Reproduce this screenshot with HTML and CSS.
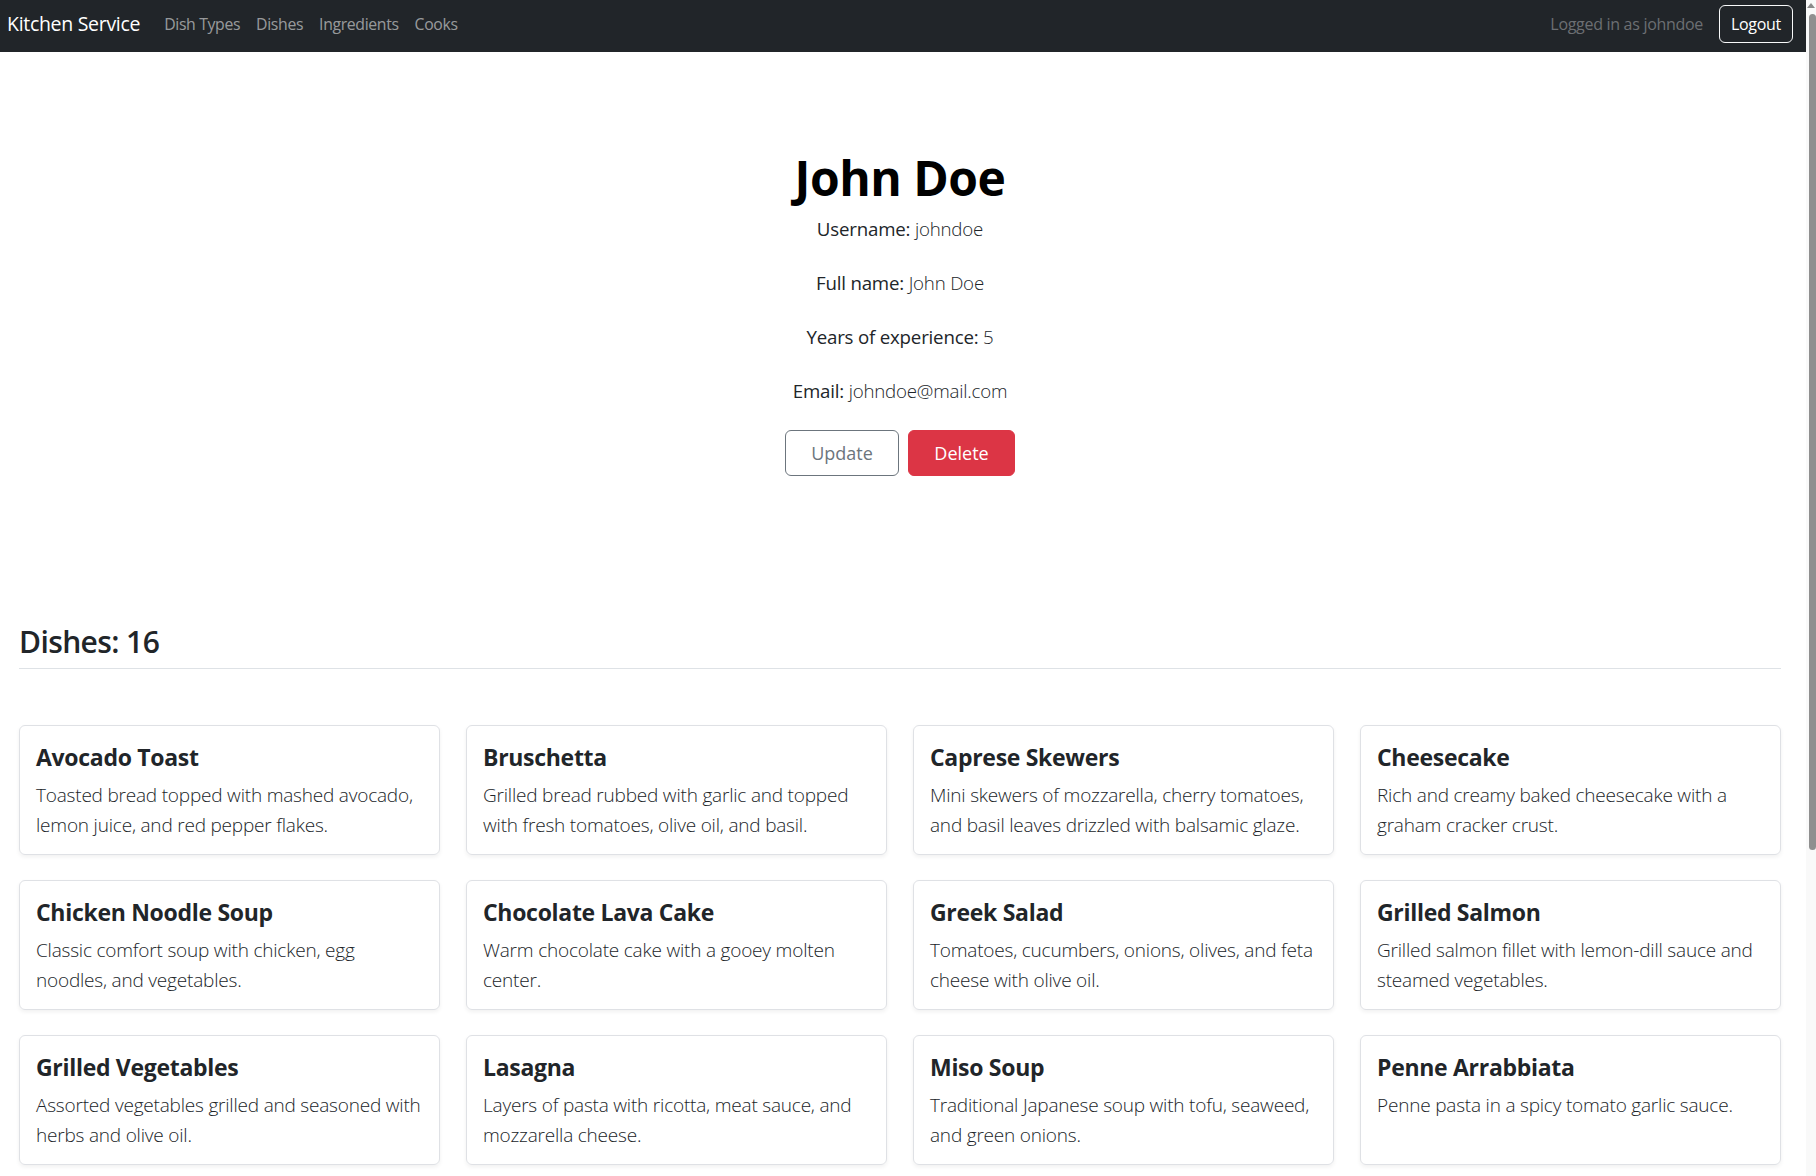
FILE: index.html
```html
<!DOCTYPE html>
<html lang="en">
<head>
<meta charset="utf-8">
<title>Kitchen Service</title>
<link rel="stylesheet" href="styles.css">
</head>
<body>
<div class="page">
  <nav class="navbar">
    <div class="nav-left">
      <a class="brand" href="#">Kitchen Service</a>
      <a class="nav-link" href="#">Dish Types</a>
      <a class="nav-link" href="#">Dishes</a>
      <a class="nav-link" href="#">Ingredients</a>
      <a class="nav-link" href="#">Cooks</a>
    </div>
    <div class="nav-right">
      <span class="logged">Logged in as johndoe</span>
      <a class="btn-logout" href="#">Logout</a>
    </div>
  </nav>

  <main class="content">
    <section class="profile">
      <h1 class="name">John Doe</h1>
      <p class="field">Username: <span class="val">johndoe</span></p>
      <p class="field">Full name: <span class="val">John Doe</span></p>
      <p class="field">Years of experience: <span class="val">5</span></p>
      <p class="field">Email: <span class="val">johndoe@mail.com</span></p>
      <div class="actions">
        <a class="btn btn-outline" href="#">Update</a>
        <a class="btn btn-danger" href="#">Delete</a>
      </div>
    </section>

    <h2 class="section-title">Dishes: 16</h2>
    <hr class="divider">

    <div class="grid">
      <div class="card"><h5 class="card-title">Avocado Toast</h5><p class="card-text">Toasted bread topped with mashed avocado, lemon juice, and red pepper flakes.</p></div>
      <div class="card"><h5 class="card-title">Bruschetta</h5><p class="card-text">Grilled bread rubbed with garlic and topped with fresh tomatoes, olive oil, and basil.</p></div>
      <div class="card"><h5 class="card-title">Caprese Skewers</h5><p class="card-text">Mini skewers of mozzarella, cherry tomatoes, and basil leaves drizzled with balsamic glaze.</p></div>
      <div class="card"><h5 class="card-title">Cheesecake</h5><p class="card-text">Rich and creamy baked cheesecake with a graham cracker crust.</p></div>
      <div class="card"><h5 class="card-title">Chicken Noodle Soup</h5><p class="card-text">Classic comfort soup with chicken, egg noodles, and vegetables.</p></div>
      <div class="card"><h5 class="card-title">Chocolate Lava Cake</h5><p class="card-text">Warm chocolate cake with a gooey molten center.</p></div>
      <div class="card"><h5 class="card-title">Greek Salad</h5><p class="card-text">Tomatoes, cucumbers, onions, olives, and feta cheese with olive oil.</p></div>
      <div class="card"><h5 class="card-title">Grilled Salmon</h5><p class="card-text">Grilled salmon fillet with lemon-dill sauce and steamed vegetables.</p></div>
      <div class="card"><h5 class="card-title">Grilled Vegetables</h5><p class="card-text">Assorted vegetables grilled and seasoned with herbs and olive oil.</p></div>
      <div class="card"><h5 class="card-title">Lasagna</h5><p class="card-text">Layers of pasta with ricotta, meat sauce, and mozzarella cheese.</p></div>
      <div class="card"><h5 class="card-title">Miso Soup</h5><p class="card-text">Traditional Japanese soup with tofu, seaweed, and green onions.</p></div>
      <div class="card"><h5 class="card-title">Penne Arrabbiata</h5><p class="card-text">Penne pasta in a spicy tomato garlic sauce.</p></div>
    </div>
  </main>
</div>
<div class="scrollbar">
  <div class="sb-arrow"></div>
  <div class="sb-thumb"></div>
</div>
</body>
</html>
```

FILE: styles.css
```css
html, body {
  margin: 0;
  padding: 0;
  height: 100%;
  overflow: hidden;
}
body {
  display: flex;
  font-family: "Open Sans", "Noto Sans", sans-serif;
  color: #212529;
  background: #fff;
}
a { text-decoration: none; }

.page {
  flex: 1;
  min-width: 0;
  height: 100%;
  overflow: hidden;
}

/* navbar */
.navbar {
  height: 52px;
  box-sizing: border-box;
  background: #212529;
  display: flex;
  align-items: center;
  justify-content: space-between;
  padding: 0 13px 5px 7px;
}
.nav-left, .nav-right {
  display: flex;
  align-items: center;
}
.brand {
  color: #fff;
  font-size: 19.5px;
  margin-right: 16px;
  letter-spacing: -0.3px;
}
.nav-link {
  color: rgba(255,255,255,0.55);
  font-size: 15.8px;
  padding: 0 8px;
  letter-spacing: -0.35px;
}
.logged {
  color: #6c6f73;
  font-size: 16px;
  margin-right: 16px;
  letter-spacing: -0.3px;
}
.btn-logout {
  color: #fff;
  border: 1px solid #f8f9fa;
  border-radius: 6px;
  height: 38px;
  box-sizing: border-box;
  display: flex;
  align-items: center;
  padding: 0 11px;
  font-size: 16px;
  letter-spacing: -0.3px;
}

/* content */
.content {
  padding: 0 25px 0 19px;
}
.profile {
  display: flex;
  flex-direction: column;
  align-items: center;
  padding-top: 96px;
  padding-bottom: 146px;
}
.name {
  margin: 0 0 6px;
  font-size: 48px;
  font-weight: 700;
  line-height: 60px;
  letter-spacing: -0.5px;
  color: #000;
}
.field {
  margin: 0 0 24px;
  font-size: 18.7px;
  line-height: 30px;
  letter-spacing: -0.2px;
}
.val {
  font-weight: 300;
}
.actions {
  display: flex;
  gap: 9px;
  margin-top: 0;
}
.btn {
  height: 46px;
  box-sizing: border-box;
  display: flex;
  align-items: center;
  justify-content: center;
  border-radius: 6px;
  font-size: 18px;
  border: 1px solid transparent;
}
.btn-outline {
  width: 114px;
  border-color: #6c757d;
  color: #6c757d;
}
.btn-danger {
  width: 107px;
  background: #dc3545;
  border-color: #dc3545;
  color: #fff;
}

.section-title {
  margin: 0;
  font-size: 30px;
  font-weight: 600;
  line-height: 40px;
  letter-spacing: -0.6px;
}
.divider {
  border: 0;
  border-top: 1px solid #dee2e6;
  margin: 6px 0 56px;
}

.grid {
  display: grid;
  grid-template-columns: repeat(4, 1fr);
  column-gap: 26px;
  row-gap: 25px;
}
.card {
  border: 1px solid #dfe1e5;
  border-radius: 6px;
  box-shadow: 0 2px 4px rgba(0,0,0,0.06);
  padding: 16px 16px 15px;
  height: 130px;
  box-sizing: border-box;
}
.card-title {
  margin: 0 0 8px;
  font-size: 23px;
  font-weight: 700;
  line-height: 30px;
  letter-spacing: -0.3px;
}
.card-text {
  margin: 0;
  font-size: 19px;
  font-weight: 300;
  line-height: 30px;
  letter-spacing: -0.2px;
  color: #212529;
}

/* fake scrollbar */
.scrollbar {
  width: 10px;
  height: 100%;
  background: #f9f9f9;
  position: relative;
}
.sb-arrow {
  position: absolute;
  top: 3px;
  right: 1px;
  width: 0;
  height: 0;
  border-left: 4px solid transparent;
  border-right: 4px solid transparent;
  border-bottom: 5px solid #8a8a8a;
}
.sb-thumb {
  position: absolute;
  top: 14px;
  right: 0;
  width: 7px;
  height: 836px;
  background: #8f8f8f;
  border-radius: 4px;
}
```
